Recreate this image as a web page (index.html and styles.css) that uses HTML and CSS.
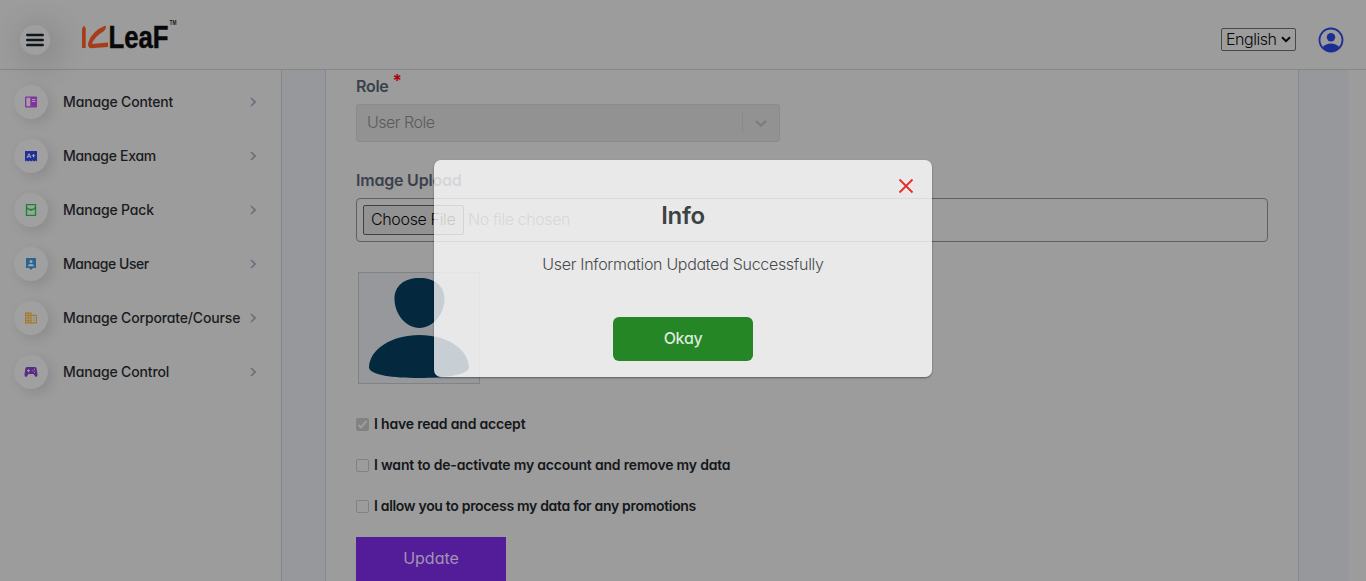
FILE: index.html
```html
<!DOCTYPE html>
<html lang="en">
<head>
<meta charset="utf-8">
<title>ICLeaF</title>
<link rel="stylesheet" href="styles.css">
</head>
<body>
<header class="header">
  <button class="menu-btn" aria-label="Menu"><svg width="18" height="14" viewBox="0 0 18 14"><path d="M1.300 2H16.700M1.300 7H16.700M1.300 12H16.700" stroke="#10171b" stroke-width="2.500" stroke-linecap="round"/></svg></button>
  <svg class="logo" width="104" height="38" viewBox="0 -2 104 38">
    <path d="M2.800 6.500L4.700 9V29H1V10Z" fill="#a63c19"/>
    <path d="M24.500 6.500Q25.800 9 23 12Q13 18 11 25L27 23.500V28L9 29.300Q6 27 7.500 23Q11 12 24.500 6.500Z" fill="#a63c19"/>
    <text class="logo-word" x="27.500" y="28.700" textLength="60" lengthAdjust="spacingAndGlyphs">LeaF</text>
    <text class="logo-tm" x="88.500" y="6" textLength="7" lengthAdjust="spacingAndGlyphs">TM</text>
  </svg>
  <div class="header-right">
    <div class="language"><span>English</span><svg width="10" height="7" viewBox="0 0 10 7"><path d="M1 1.200L5 5.200L9 1.200" fill="none" stroke="#080808" stroke-width="2"/></svg></div>
    <svg class="account" width="26" height="26" viewBox="0 0 26 26"><circle cx="13" cy="13" r="11.500" fill="none" stroke="#1c2e94" stroke-width="1.800"/><circle cx="13" cy="10.300" r="4.200" fill="#1c2e94"/><path d="M4.800 20Q8 16.500 13 16.500T21.200 20Q18 24.500 13 24.500T4.800 20Z" fill="#1c2e94"/></svg>
  </div>
</header>
<div class="body">
  <nav class="sidebar">
    <a class="item"><span class="bubble"><svg width="12" height="12" viewBox="0 0 12 12"><path fill-rule="evenodd" fill="#8431a4" d="M1 .5H11Q12 .5 12 1.500V10.500Q12 11.500 11 11.500H1Q0 11.500 0 10.500V1.500Q0 .5 1 .5ZM1.300 1.800V10.200H5.300V1.800ZM7 3V4H10.500V3ZM7 5V6H10.500V5Z"/></svg></span><span class="name t1">Manage Content</span><svg class="chev" width="6" height="10" viewBox="0 0 6 10"><path d="M1 1L5 5L1 9"/></svg></a>
    <a class="item"><span class="bubble"><svg width="12" height="12" viewBox="0 0 12 12"><path fill="#202f99" d="M0 1H12V11.500L10.500 10.500L9 11.500L7.500 10.500L6 11.500L4.500 10.500L3 11.500L1.500 10.500L0 11.500Z"/><path d="M2 8L4 3.700L6 8M2.800 6.700H5.200M6.800 5.700H10.200M8.500 4V7.400" fill="none" stroke="#a8a8ad"/></svg></span><span class="name t2">Manage Exam</span><svg class="chev" width="6" height="10" viewBox="0 0 6 10"><path d="M1 1L5 5L1 9"/></svg></a>
    <a class="item"><span class="bubble"><svg width="12" height="12" viewBox="0 0 12 12"><path d="M1.500 .7H10.500V11.300H1.500ZM1.500 4.200L4.500 5.500H7.500L10.500 4.200M1.500 4H3M9 4H10.500M6 5V7" fill="none" stroke="#16872f" stroke-width="1.300"/></svg></span><span class="name t3">Manage Pack</span><svg class="chev" width="6" height="10" viewBox="0 0 6 10"><path d="M1 1L5 5L1 9"/></svg></a>
    <a class="item"><span class="bubble"><svg width="12" height="12" viewBox="0 0 12 12"><path d="M1 0H11V10H8L6 12L4 10H1Z" fill="#2a6490"/><circle cx="6" cy="3.500" r="1.500" fill="#9fa5aa"/><path d="M3 8.200Q3 6 6 6T9 8.200Z" fill="#9fa5aa"/></svg></span><span class="name t4">Manage User</span><svg class="chev" width="6" height="10" viewBox="0 0 6 10"><path d="M1 1L5 5L1 9"/></svg></a>
    <a class="item"><span class="bubble"><svg width="12" height="12" viewBox="0 0 12 12"><path d="M.6 1.100H6V10.900H.6ZM6 3.400H11.400V10.900H6M.6 3.500H6M.6 6H6M.6 8.500H6M3.300 1V11M8 5.800H9.500M8 8.200H9.500" fill="none" stroke="#a87825" stroke-width="1.100"/></svg></span><span class="name t5">Manage Corporate/Course</span><svg class="chev" width="6" height="10" viewBox="0 0 6 10"><path d="M1 1L5 5L1 9"/></svg></a>
    <a class="item"><span class="bubble"><svg width="14" height="12" viewBox="0 0 14 12"><path d="M3 1H11Q12.300 1 12.600 2.500L13.500 8.500Q13.500 11 11.700 11L9.500 8H4.500L2.300 11Q.5 11 .5 8.500L1.400 2.500Q1.700 1 3 1Z" fill="#5a2a85"/><path d="M3 4.700H6M4.500 3.200V6.200M8.500 4.700H9.500M10 3.200H11M10 6.200H11" stroke="#a39ca9"/></svg></span><span class="name t6">Manage Control</span><svg class="chev" width="6" height="10" viewBox="0 0 6 10"><path d="M1 1L5 5L1 9"/></svg></a>
  </nav>
  <main class="main">
    <section class="card">
      <label class="label"><span class="role">Role</span><span class="star">*</span></label>
      <div class="select"><span class="placeholder">User Role</span><span class="arrow"><svg width="14" height="9" viewBox="0 0 14 9"><path d="M2 2L7 6.500L12 2" fill="none" stroke="#7b7b7b" stroke-width="2.200"/></svg></span></div>
      <label class="label upload-label"><span class="upload-text">Image Upload</span></label>
      <div class="file"><span class="choose"><span class="choose-text">Choose File</span></span><span class="nofile">No file chosen</span></div>
      <div class="avatar"><svg width="120" height="110" viewBox="0 0 120 110"><path d="M60.500 5C76 5 85.500 13 85.500 26C85.500 41 74 55 60.500 55S35.500 41 35.500 26C35.500 13 45 5 60.500 5ZM60.500 62C88 62 110 76 110 95C108 102 86 105 60 105S12 102 10 95C10 76 33 62 60.500 62Z" fill="#04283e"/></svg></div>
      <div class="check"><span class="box checked"><svg width="13" height="13" viewBox="0 0 13 13"><path d="M2.500 7L5 9.500L10.500 3" fill="none" stroke="#9d9d9d" stroke-width="2"/></svg></span><span class="text c1">I have read and accept</span></div>
      <div class="check"><span class="box"></span><span class="text c2">I want to de-activate my account and remove my data</span></div>
      <div class="check"><span class="box"></span><span class="text c3">I allow you to process my data for any promotions</span></div>
      <button class="update"><span>Update</span></button>
    </section>
  </main>
</div>
<div class="modal" role="dialog">
  <svg class="close" width="16" height="16" viewBox="0 0 16 16"><path d="M1.500 1.500L14.500 14.500M14.500 1.500L1.500 14.500" stroke="#e72b2b" stroke-width="1.800"/></svg>
  <h2 class="title"><span>Info</span></h2>
  <p class="message"><span>User Information Updated Successfully</span></p>
  <button class="okay"><span>Okay</span></button>
</div>
</body>
</html>
```
FILE: styles.css
```css
* { box-sizing: border-box; }
body { margin: 0; height: 581px; overflow: hidden; background: #9c9c9c; font-family: Inter, "Open Sans", sans-serif; font-feature-settings: "cv11" 1; font-size: 16px; color: #191b20; }
button { font: inherit; font-feature-settings: inherit; border: 0; padding: 0; }
.header { height: 70px; border-bottom: 1px solid #858686; display: flex; align-items: flex-start; padding: 17px 22px 0 20px; }
.menu-btn { width: 30px; height: 30px; margin-top: 8px; border-radius: 50%; background: #9f9f9f; box-shadow: 5px 5px 30px 6px rgba(0,0,0,.13); display: flex; align-items: center; justify-content: center; }
.logo { margin-left: 31px; flex: none; }
.logo-word { font: bold 32px "Liberation Sans", sans-serif; fill: #080808; stroke: #080808; stroke-width: .5; stroke-linejoin: round; }
.logo-tm { font: bold 7.5px "Liberation Sans", sans-serif; fill: #1a1a1a; }
.header-right { margin-left: auto; margin-top: 10px; display: flex; gap: 22px; align-items: center; }
.language { width: 75px; height: 23px; margin-top: -1px; border: 1px solid #484848; border-radius: 2px; display: flex; align-items: center; justify-content: space-between; padding: 0 4px; color: #080808; font-weight: 300; letter-spacing: -.45px; }
.language span { padding-bottom: 2px; }
.body { display: flex; height: 511px; }
.sidebar { width: 282px; flex: none; border-right: 1px solid #858686; padding: 5px 25px 0 14px; }
.item { height: 54px; display: flex; align-items: center; }
.bubble { width: 34px; height: 34px; border-radius: 50%; background: #a0a0a0; box-shadow: 4px 4px 12px rgba(0,0,0,.11); display: flex; align-items: center; justify-content: center; flex: none; }
.name { margin-left: 15px; font-size: 14px; line-height: 18px; font-weight: 500; white-space: nowrap; letter-spacing: -.15px; }
.t2 { letter-spacing: -.3px; }
.t4 { letter-spacing: -.45px; }
.chev { margin-left: auto; flex: none; }
.chev path { fill: none; stroke: #6b6e7b; stroke-width: 1.6; }
.main { flex: 1; background: #96989b; border-right: 17px solid #9c9c9c; padding: 0 50px 0 43px; }
.card { height: 511px; overflow: hidden; background: #9c9c9c; border: solid #85898f; border-width: 0 1px; padding: 5px 30px 0; }
.label { height: 29px; display: flex; align-items: flex-start; line-height: 23px; color: #3b414c; font-weight: 600; }
.role { letter-spacing: -.3px; }
.upload-text { letter-spacing: -.2px; }
.star { color: #ad0009; margin: -5px 0 0 4px; font-size: 17px; font-weight: 700; }
.select { width: 424px; height: 38px; border: 1px solid #8b8b8b; border-radius: 3px; background: #929292; display: flex; align-items: center; padding-left: 10px; color: #5b5b5b; font-weight: 300; }
.placeholder { letter-spacing: -.5px; padding-bottom: 2px; }
.arrow { margin-left: auto; width: 37px; height: 20px; border-left: 1px solid #898989; display: flex; align-items: center; justify-content: center; }
.upload-label { margin-top: 27px; }
.file { height: 44px; border: 1px solid #606060; border-radius: 4px; display: flex; align-items: center; gap: 4px; padding-left: 6px; font-weight: 300; }
.choose { height: 30px; width: 101px; border: 1px solid #424242; border-radius: 2px; background: #929292; color: #080808; display: flex; align-items: center; padding-left: 7px; white-space: nowrap; }
.choose-text { letter-spacing: -.35px; padding-bottom: 2px; }
.nofile { color: #444950; letter-spacing: -.4px; padding-bottom: 2px; }
.avatar { margin: 30px 0 0 2px; width: 122px; height: 112px; border: 1px solid #808386; background: #96989b; }
.avatar svg { display: block; }
.check { height: 41px; display: flex; align-items: center; gap: 5px; font-size: 14px; font-weight: 600; color: #14171a; white-space: nowrap; }
.text { padding-bottom: 2px; }
.c1 { letter-spacing: -.19px; }
.c2 { letter-spacing: -.19px; }
.c3 { letter-spacing: -.32px; }
.avatar + .check { margin-top: 20px; }
.box { width: 13px; height: 13px; border: 1px solid #818181; border-radius: 2px; flex: none; }
.checked { border: 0; background: #828282; }
.checked svg { display: block; }
.update { display: block; width: 150px; height: 44px; margin-top: 10px; background: #531d9a; color: #a394b1; font-weight: 400; }
.modal { position: absolute; left: 434px; top: 160px; width: 498px; height: 217px; border-radius: 7px; background: rgba(255,255,255,.78); box-shadow: 0 1px 2px rgba(0,0,0,.42); display: flex; flex-direction: column; align-items: center; }
.close { align-self: flex-end; margin: 18px 18px 0 0; flex: none; }
.title { margin: 6px 0 0; font-size: 24px; line-height: 32px; font-weight: 600; color: #3d4245; letter-spacing: -.3px; }
.message { margin: 20px 0 0; line-height: 24px; font-weight: 300; color: #474a4c; white-space: nowrap; letter-spacing: -.3px; }
.okay { width: 140px; height: 44px; margin-top: 41px; border-radius: 6px; background: #248624; color: #dce9dc; font-weight: 500; letter-spacing: -.3px; }
.okay span, .update span { position: relative; top: -1px; }
```
